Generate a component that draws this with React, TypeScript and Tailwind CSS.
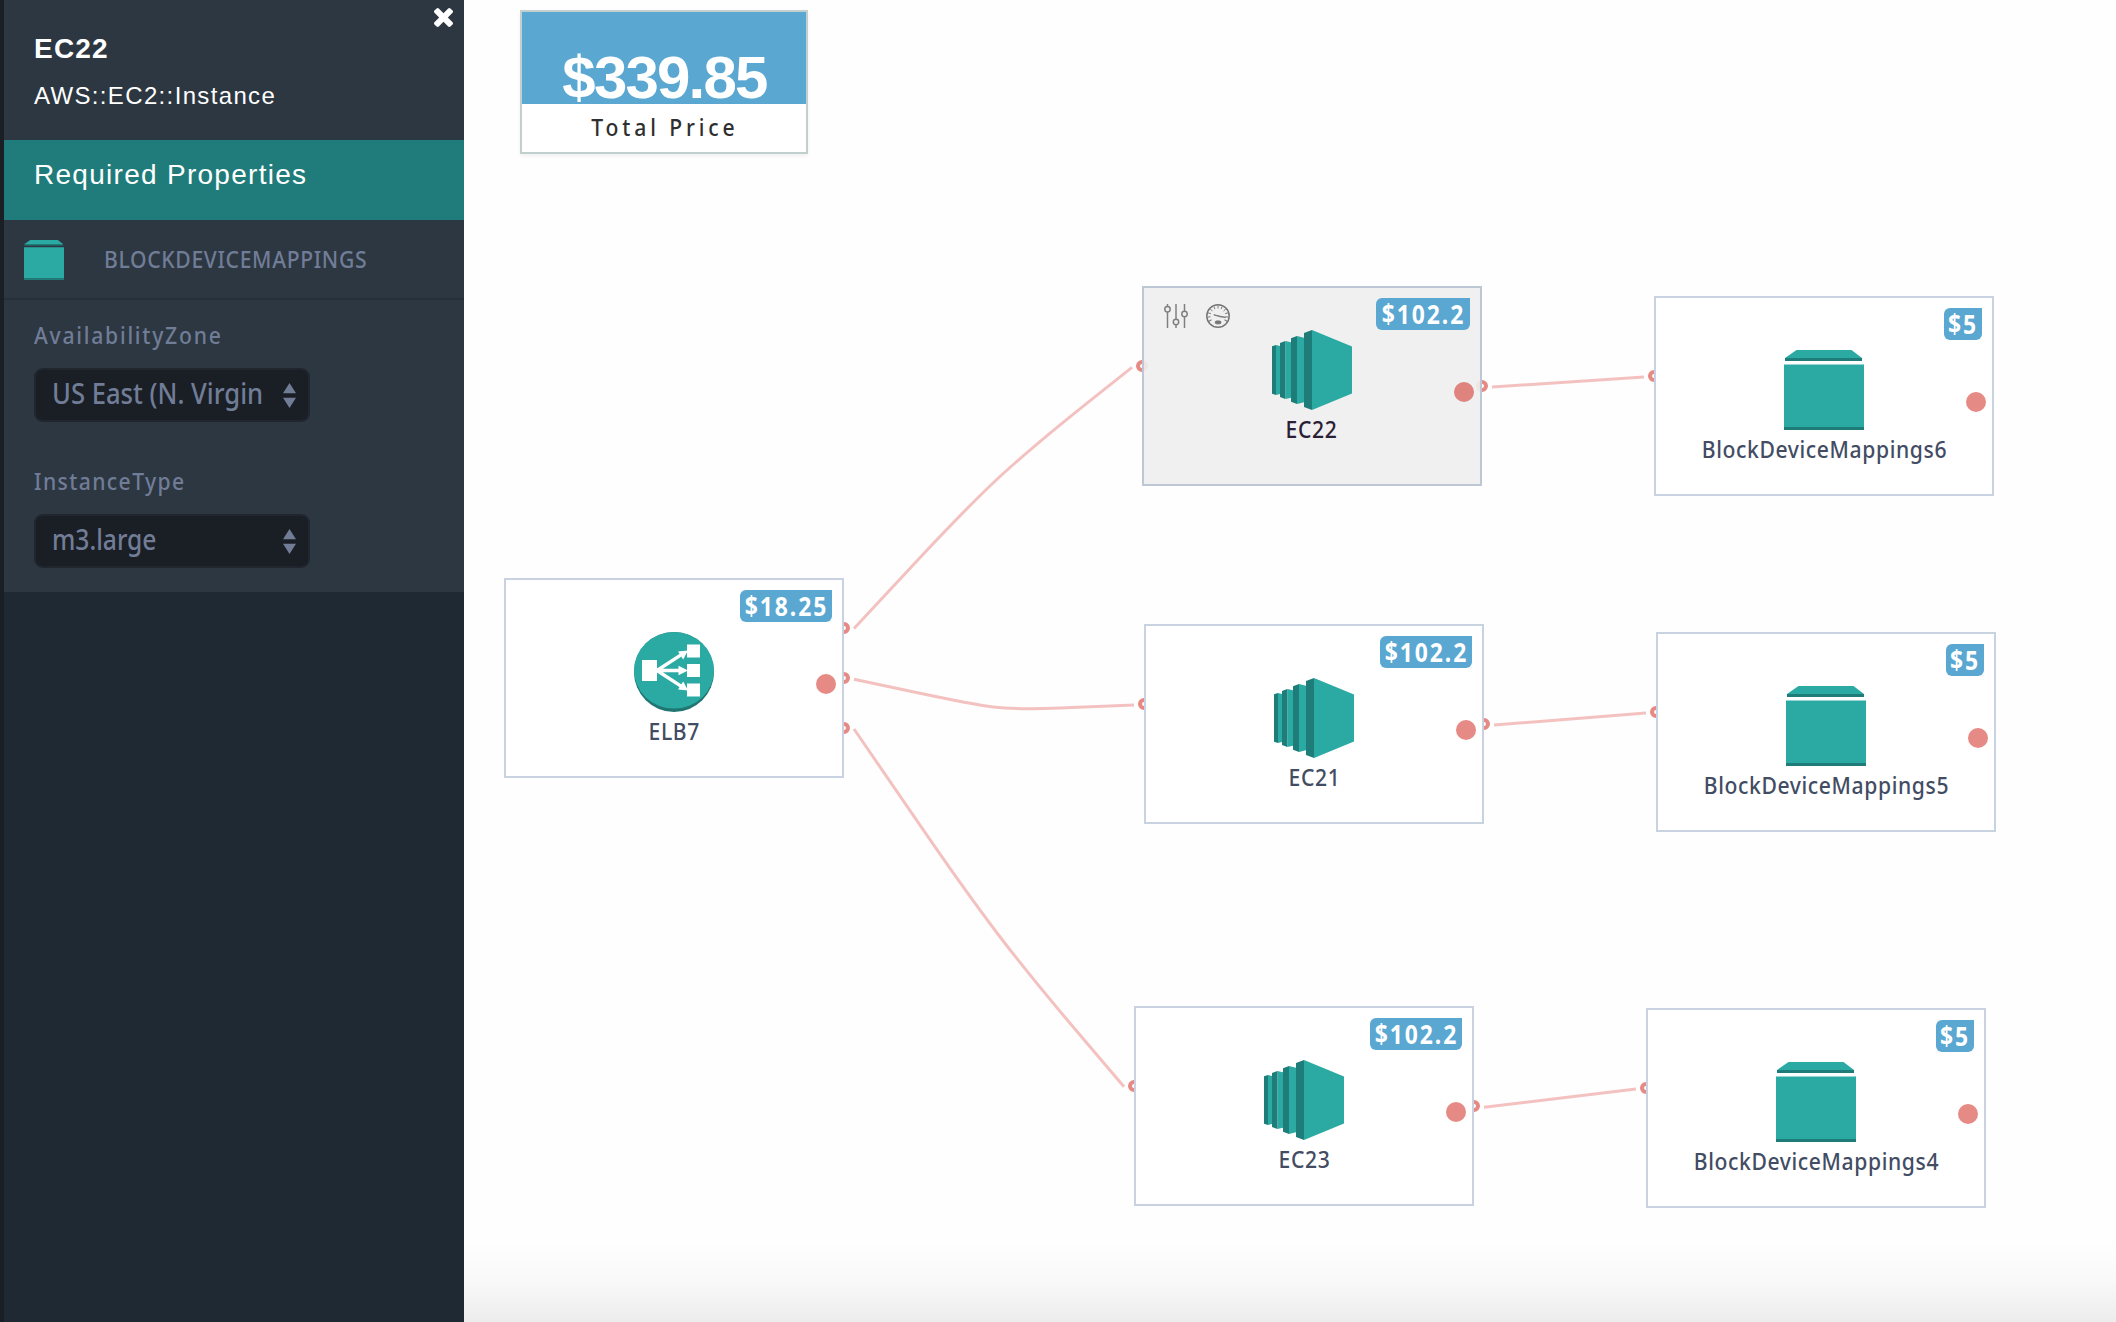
import type { ReactNode } from 'react';

const PT = "font-['Noto_Sans',sans-serif]";

function BlockIcon({ className }: { className: string }) {
  return (
    <svg viewBox="0 0 80 80" className={className}>
      <path d="M1 8 12.5 0h55L78 8z" fill="#2baaa4" />
      <path d="M1 8h77v3H1z" fill="#1f7d79" />
      <path d="M0 14.5h80V77H0z" fill="#2baaa4" />
      <path d="M0 77h80v3H0z" fill="#1f7d79" />
    </svg>
  );
}

function InstanceIcon() {
  return (
    <svg viewBox="0 0 80 80" className="size-20">
      <g fill="#2baaa4">
        <path d="M4 15l4 1v48l-4 1z" />
        <path d="M13.3 11l5.7 1.2v55.6L13.3 69z" />
        <path d="M25 6l7 1.7v64.6L25 74z" />
        <path d="M40 0l40 16.5v47L40 80z" />
      </g>
      <g fill="#1f7d79">
        <path d="M0 16.3L4 15v50l-4-1.3z" />
        <path d="M8 13l5.3-2v58L8 67z" />
        <path d="M19 8.3L25 6v68l-6-2.3z" />
        <path d="M32 3l8-3v80l-8-3z" />
      </g>
    </svg>
  );
}

function BalancerIcon() {
  return (
    <svg viewBox="0 0 80 80" className="size-20">
      <circle cx="40" cy="40" r="40" fill="#1f7672" />
      <ellipse cx="40" cy="38.3" rx="40" ry="38.3" fill="#2baaa4" />
      <g fill="#fff">
        <path d="M8 28h15v21H8z" />
        <path d="M53 12.5h13v13H53z" />
        <path d="M53 32h13v13H53z" />
        <path d="M53 51.5h13v13H53z" />
        <path d="M44.5 33.8l9.5 4.7-9.5 4.7z" />
        <path d="M54 18.5l-10 .9 5.2 8z" />
        <path d="M54 58.5l-10-.9 5.2-8z" />
      </g>
      <path d="M23 38.5L47 22.8M23 38.5h23M23 38.5l24 15.7" stroke="#fff" strokeWidth="3.4" fill="none" />
    </svg>
  );
}

function SlidersIcon() {
  return (
    <svg viewBox="0 0 24 24" className="size-6" fill="none" stroke="#808080" strokeWidth="1.5">
      <path d="M3.5 0v2.5M3.5 8v16M12 0v15.3M12 20.8V24M20.5 0v7.2M20.5 12.8V24" />
      <circle cx="3.5" cy="5.3" r="2.7" />
      <circle cx="12" cy="18" r="2.7" />
      <circle cx="20.5" cy="10" r="2.7" />
    </svg>
  );
}

const gaugeTicks = [-120, -96, -72, -48, -24, 0, 24, 48, 72, 96, 120];

function GaugeIcon() {
  return (
    <svg viewBox="0 0 24 24" className="size-6" fill="none" stroke="#757575">
      <circle cx="12" cy="12" r="11.2" strokeWidth="1.5" />
      {gaugeTicks.map((angle) => (
        <path key={angle} d="M12 1.5v3" strokeWidth="0.9" transform={`rotate(${angle} 12 12)`} />
      ))}
      <path d="M7.8 10.8l12 2.6-5.6-.5z" strokeWidth="0.9" />
      <rect x="9.3" y="17" width="5.6" height="2.8" rx="1.2" fill="#757575" />
    </svg>
  );
}

function CloseIcon() {
  return (
    <svg viewBox="302 366 1188 1188" className="size-[19px]" fill="#fff">
      <path d="M1490 1322q0 40-28 68l-136 136q-28 28-68 28t-68-28l-294-294-294 294q-28 28-68 28t-68-28l-136-136q-28-28-28-68t28-68l294-294-294-294q-28-28-28-68t28-68l136-136q28-28 68-28t68 28l294 294 294-294q28-28 68-28t68 28l136 136q28 28 28 68t-28 68l-294 294 294 294q28 28 28 68z" />
    </svg>
  );
}

function SelectField({ label, value, labelClass, valueClass }: { label: string; value: string; labelClass: string; valueClass: string }) {
  return (
    <div>
      <div className={`${PT} ${labelClass} h-8 origin-left scale-x-[0.88] whitespace-nowrap text-[24px] leading-8 font-medium text-[#717d97]`}>
        {label}
      </div>
      <button className="mt-[17px] flex h-[54px] w-[276px] items-center justify-between rounded-[9px] border-2 border-[#20252e] bg-[#1a1e25] pr-3 pl-4">
        <span className={`${PT} ${valueClass} -mt-1 w-[230px] origin-left text-left text-[28px] leading-10 font-medium whitespace-nowrap text-[#717d97]`}>
          {value}
        </span>
        <svg viewBox="0 0 13 25" className="h-[25px] w-[13px] shrink-0" fill="#717d97">
          <path d="M6.5 0L13 10.3H0zM6.5 25L13 14.7H0z" />
        </svg>
      </button>
    </div>
  );
}

type NodeProps = {
  place: string;
  name: string;
  price: string;
  badge: string;
  icon: ReactNode;
  selected?: boolean;
};

function DiagramNode({ place, name, price, badge, icon, selected }: NodeProps) {
  return (
    <div
      className={`absolute ${place} flex h-[200px] w-[340px] flex-col items-center border-2 ${
        selected ? 'border-[#bdc7d6] bg-[#eeeeee]/90 pt-[42px]' : 'border-[#c9d2e0] bg-white pt-[52px]'
      }`}
    >
      {selected && (
        <div className="absolute top-4 left-5 flex gap-[18px]">
          <SlidersIcon />
          <GaugeIcon />
        </div>
      )}
      <div className={`absolute top-[10px] right-[10px] flex h-8 justify-center rounded-md rounded-tr-none bg-[#5aa7d2] ${badge}`}>
        <span className={`${PT} scale-x-[0.88] text-[26px] leading-8 font-bold tracking-[2.2px] whitespace-nowrap text-white`}>
          {price}
        </span>
      </div>
      {icon}
      <div
        className={`${PT} mt-[3px] scale-x-[0.88] text-[24px] leading-8 font-medium tracking-[0.7px] whitespace-nowrap ${
          selected ? '-ml-px text-[#2a2033]' : 'text-[#424c62]'
        }`}
      >
        {name}
      </div>
      <div className={`absolute top-[94px] right-[6px] size-5 rounded-full ${selected ? 'bg-[#df837e]' : 'bg-[#e68a85]'}`} />
    </div>
  );
}

const ports = [
  [844, 628], [844, 678], [844, 728],
  [1142, 366], [1482, 386],
  [1144, 704], [1484, 724],
  [1134, 1086], [1474, 1106],
  [1654, 376], [1656, 712], [1646, 1088],
];

const links = [
  'M854 628.5L915 563C984 489 1010 464.6 1088 402.3L1132 367.3',
  'M854 679.2L914 692C990 708.1 1000 710.3 1060 708L1134 705',
  'M854 729L921.7 827.7C982 915.4 1013.6 957 1080 1035L1124 1086.7',
  'M1492 387L1644 377',
  'M1494 725L1646 713',
  'M1484 1107.3L1636 1089',
];

function Sidebar() {
  return (
    <aside className="flex h-full w-[464px] shrink-0 flex-col border-l-4 border-[#1a1e25] bg-[#1f2934] font-['Liberation_Sans',Arial,sans-serif] text-white">
      <header className="relative h-[140px] bg-[#2c3742] pt-[33px] pl-[30px]">
        <div className="absolute top-2 right-[11px]">
          <CloseIcon />
        </div>
        <h1 className="text-[28px] leading-8 font-bold tracking-[1.2px]">EC22</h1>
        <p className="mt-[15px] text-[24px] leading-8 tracking-[1.35px]">AWS::EC2::Instance</p>
      </header>
      <div className="h-20 bg-[#1f7c7a] pt-[19px] pl-[30px] text-[28px] leading-8 tracking-[1.28px]">
        Required Properties
      </div>
      <div className="flex h-20 items-center border-b-2 border-[#25303b] bg-[#2c3742] pl-5">
        <BlockIcon className="mt-[2px] size-10" />
        <span className={`${PT} ml-10 origin-left scale-x-[0.88] text-[24px] leading-8 font-medium tracking-[0.75px] whitespace-nowrap text-[#717d97]`}>
          BLOCKDEVICEMAPPINGS
        </span>
      </div>
      <div className="flex h-[292px] flex-col gap-[43px] bg-[#2c3742] pt-[19px] pl-[30px]">
        <SelectField label="AvailabilityZone" value="US East (N. Virgin" labelClass="tracking-[2px]" valueClass="scale-x-[0.915]" />
        <SelectField label="InstanceType" value="m3.large" labelClass="tracking-[1.6px]" valueClass="scale-x-[0.88]" />
      </div>
    </aside>
  );
}

export default function App() {
  return (
    <div className="flex h-[1322px] w-[2116px] overflow-hidden bg-[#fefefe]">
      <Sidebar />
      <main className="relative h-full grow overflow-hidden">
        <svg viewBox="464 0 1652 1322" className="absolute inset-0 size-full" fill="none">
          {links.map((d) => (
            <path key={d} d={d} stroke="#f3c2c0" strokeWidth="3" />
          ))}
          {ports.map(([x, y]) => (
            <circle key={`${x}-${y}`} cx={x} cy={y} r="4" stroke="#e68a85" strokeWidth="4" />
          ))}
        </svg>

        <section className="absolute top-[10px] left-14 h-36 w-72 border-2 border-[#c1cfcf] bg-white text-center shadow-[0_2px_4px_rgba(0,0,0,0.06)]">
          <div className="h-[92px] bg-[#5aa7d2] pt-[34px] pl-px font-['Liberation_Sans',Arial,sans-serif] text-[60px] leading-[64px] font-bold tracking-[-1.8px] text-white">
            $339.85
          </div>
          <div className={`${PT} mt-[7px] scale-x-[0.88] pl-[2px] text-[24px] leading-8 font-medium tracking-[4.4px] text-[#2f2f2f]`}>Total Price</div>
        </section>

        <DiagramNode place="left-[40px] top-[578px]" name="ELB7" price="$18.25" badge="w-[92px]" icon={<BalancerIcon />} />
        <DiagramNode place="left-[678px] top-[286px]" name="EC22" price="$102.2" badge="w-[94px]" icon={<InstanceIcon />} selected />
        <DiagramNode place="left-[680px] top-[624px]" name="EC21" price="$102.2" badge="w-[92px]" icon={<InstanceIcon />} />
        <DiagramNode place="left-[670px] top-[1006px]" name="EC23" price="$102.2" badge="w-[92px]" icon={<InstanceIcon />} />
        <DiagramNode place="left-[1190px] top-[296px]" name="BlockDeviceMappings6" price="$5" badge="w-[38px]" icon={<BlockIcon className="size-20" />} />
        <DiagramNode place="left-[1192px] top-[632px]" name="BlockDeviceMappings5" price="$5" badge="w-[38px]" icon={<BlockIcon className="size-20" />} />
        <DiagramNode place="left-[1182px] top-[1008px]" name="BlockDeviceMappings4" price="$5" badge="w-[38px]" icon={<BlockIcon className="size-20" />} />

        <div className="absolute inset-x-0 bottom-0 h-[84px] bg-linear-to-b from-transparent via-black/[0.02] to-black/[0.07]" />
      </main>
    </div>
  );
}
